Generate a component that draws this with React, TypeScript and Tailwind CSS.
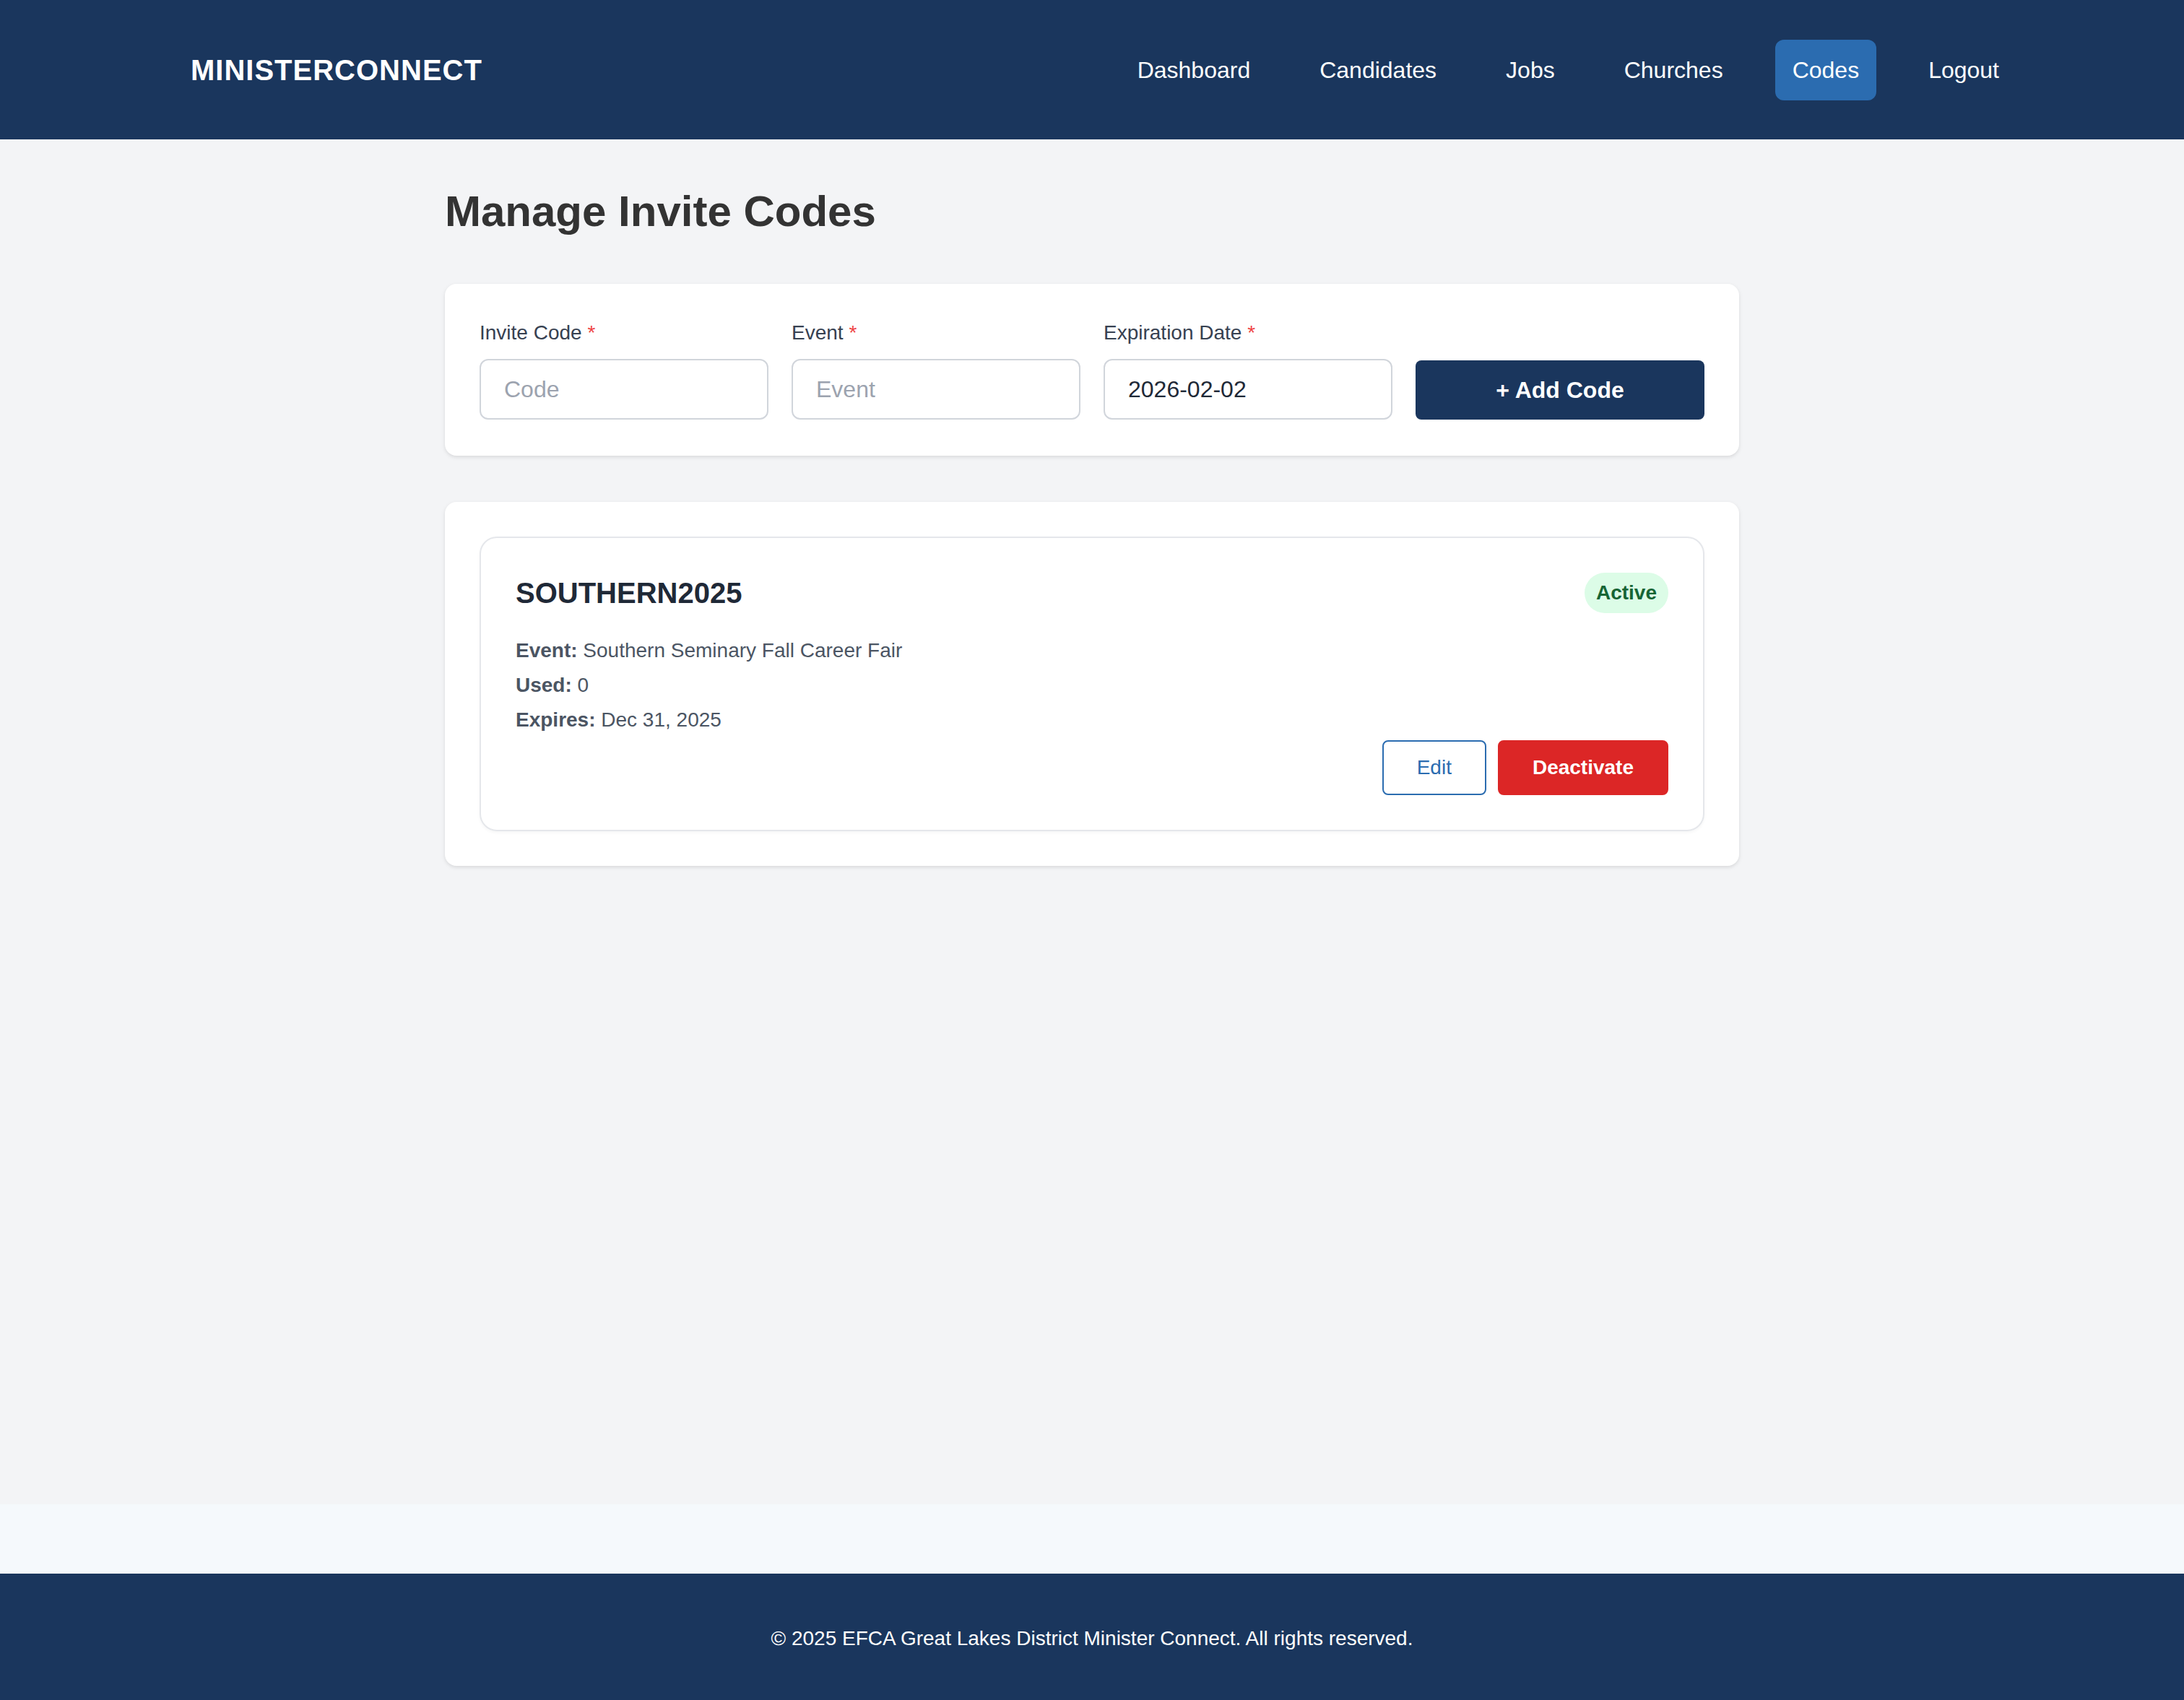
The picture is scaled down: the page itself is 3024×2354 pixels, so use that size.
import React from "react";

const navItems = ["Dashboard", "Candidates", "Jobs", "Churches", "Codes", "Logout"];

const Field: React.FC<{ label: string; placeholder?: string; value?: string }> = ({
  label,
  placeholder,
  value,
}) => (
  <div className="flex flex-col">
    <label className="text-[28px] leading-[40px] text-[#374151] mb-4">
      {label} <span className="text-[#ef4444]">*</span>
    </label>
    <input
      type="text"
      placeholder={placeholder}
      defaultValue={value}
      className="w-full border-2 border-[#d1d5db] rounded-xl px-8 py-4 text-[32px] leading-[48px] text-[#1f2937] placeholder:text-[#9ca3af] bg-white outline-none"
    />
  </div>
);

export default function App() {
  return (
    <div className="min-h-screen flex flex-col font-['Liberation_Sans',Arial,Helvetica,sans-serif]">
      <header className="w-full bg-[#1a365d] h-[193px] flex items-center">
        <div className="w-[2560px] mx-auto flex items-center justify-between">
          <div className="pl-8 text-[40px] leading-[56px] font-bold tracking-wide text-white">
            MINISTERCONNECT
          </div>
          <nav className="flex items-center gap-12">
            {navItems.map((item) => (
              <a
                key={item}
                className={`px-6 py-[18px] rounded-xl text-[32px] leading-[48px] text-white ${
                  item === "Codes" ? "bg-[#2b6cb0]" : ""
                }`}
              >
                {item}
              </a>
            ))}
          </nav>
        </div>
      </header>

      <main className="bg-[#f3f4f6] min-h-[1890px]">
        <div className="max-w-[1792px] mx-auto pt-16">
          <h1 className="text-[60px] leading-[72px] font-bold text-[#333333] mb-16">
            Manage Invite Codes
          </h1>

          {/* add form */}
          <div className="bg-white rounded-2xl px-12 pt-12 pb-[50px] mb-16 shadow-[0_2px_6px_rgba(0,0,0,0.08),0_2px_4px_rgba(0,0,0,0.04)]">
            <div className="grid grid-cols-4 gap-8 items-end">
              <Field label="Invite Code" placeholder="Code" />
              <Field label="Event" placeholder="Event" />
              <Field label="Expiration Date" value="2026-02-02" />
              <button className="w-full bg-[#1a365d] text-white font-bold text-[32px] leading-[48px] py-[17px] rounded-lg">
                + Add Code
              </button>
            </div>
          </div>

          {/* code list */}
          <div className="bg-white rounded-2xl p-12 shadow-[0_2px_6px_rgba(0,0,0,0.08),0_2px_4px_rgba(0,0,0,0.04)]">
            <div className="border-2 border-[#e5e7eb] rounded-3xl p-12 shadow-[0_2px_4px_rgba(0,0,0,0.04)]">
              <div className="flex items-start justify-between mb-8">
                <h2 className="text-[40px] leading-[56px] font-bold text-[#1f2937]">SOUTHERN2025</h2>
                <span className="bg-[#dcfce7] text-[#166534] font-bold text-[28px] leading-[40px] px-4 py-2 rounded-full">
                  Active
                </span>
              </div>
              <div className="text-[28px] leading-[40px] text-[#4b5563]">
                <p className="mb-2">
                  <span className="font-bold">Event:</span> Southern Seminary Fall Career Fair
                </p>
                <p className="mb-2">
                  <span className="font-bold">Used:</span> 0
                </p>
                <p className="mb-2">
                  <span className="font-bold">Expires:</span> Dec 31, 2025
                </p>
              </div>
              <div className="flex justify-end gap-4">
                <button className="bg-white border-2 border-[#2b6cb0] text-[#2b6cb0] text-[28px] leading-[40px] px-[46px] py-4 rounded-lg">
                  Edit
                </button>
                <button className="bg-[#dc2626] border-2 border-[#dc2626] text-white font-bold text-[28px] leading-[40px] px-[46px] py-4 rounded-lg">
                  Deactivate
                </button>
              </div>
            </div>
          </div>
        </div>
      </main>

      <div className="h-[96px] bg-[#f5f9fc]" />

      <footer className="bg-[#1a365d] pt-[70px] pb-[70px]">
        <p className="text-center text-white text-[28px] leading-[40px]">
          © 2025 EFCA Great Lakes District Minister Connect. All rights reserved.
        </p>
      </footer>
    </div>
  );
}
